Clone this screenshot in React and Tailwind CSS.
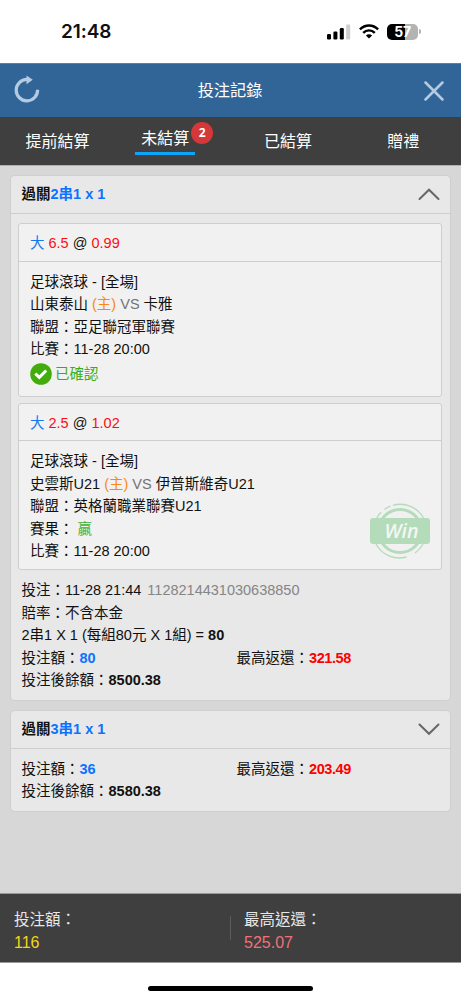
import React from "react";

const slips = [
  {
    odds: "6.5",
    price: "0.99",
    home: "山東泰山",
    away: "卡雅",
    league: "亞足聯冠軍聯賽",
    time: "11-28 20:00",
    confirmed: true,
  },
  {
    odds: "2.5",
    price: "1.02",
    home: "史雲斯U21",
    away: "伊普斯維奇U21",
    league: "英格蘭職業聯賽U21",
    time: "11-28 20:00",
    result: "贏",
  },
];

function StatusBar() {
  return (
    <div className="flex h-[63px] shrink-0 items-center justify-between pl-[61px] pr-[40px]">
      <span className="font-['Inter'] text-[19px] leading-6 font-semibold tracking-[-0.1px]">
        21:48
      </span>
      <div className="flex items-center">
        <svg width="24" height="16" viewBox="0 0 24 16">
          <rect x="0" y="10" width="4" height="5.5" rx="1.2" />
          <rect x="6.4" y="7.5" width="4" height="8" rx="1.2" />
          <rect x="12.8" y="4" width="4" height="11.5" rx="1.2" />
          <rect x="19.2" y="0.5" width="4" height="15" rx="1.2" fill="#cfcfcf" />
        </svg>
        <svg className="ml-2" width="20" height="15" viewBox="0 0 20 15">
          <g fill="none" stroke="#000" strokeWidth="2.4">
            <path d="M0.9 5.4 C6 0.1 14 0.1 19.1 5.4" />
            <path d="M4.2 8.9 C7.5 5.5 12.5 5.5 15.8 8.9" />
          </g>
          <path d="M10 14.6 L6.9 11.5 C8.6 9.9 11.4 9.9 13.1 11.5 Z" />
        </svg>
        <div className="ml-2 flex h-4 w-[31px] items-center justify-center rounded-[5px] bg-linear-to-r from-black from-[57%] to-[#b3b3b3] to-[57%] font-['Inter'] text-[14px] leading-none font-bold tracking-[-0.3px] text-white">
          57
        </div>
        <div className="ml-px h-[5px] w-[2px] rounded-r-full bg-[#b3b3b3]" />
      </div>
    </div>
  );
}

function Header() {
  return (
    <div className="flex h-[54px] shrink-0 items-center justify-between border-t border-[#5b7fa5] bg-[#316597] pr-[17px] pl-[14px] text-white">
      <svg className="mb-[3px]" width="26" height="28" viewBox="0 0 26 28">
        <path
          d="M23.6 14.8 A10.7 10.7 0 1 1 13 4.4"
          fill="none"
          stroke="#b4cbe3"
          strokeWidth="3.2"
        />
        <path d="M12.5 0.4 L18.8 4.7 L12.5 9.2 Z" fill="#b4cbe3" />
      </svg>
      <h1 className="mr-1 text-[16.2px]">投注記錄</h1>
      <svg width="20" height="20" viewBox="0 0 20 20">
        <path
          d="M1.5 1.5 L18.5 18.5 M18.5 1.5 L1.5 18.5"
          stroke="#b4cbe3"
          strokeWidth="2.5"
          strokeLinecap="round"
        />
      </svg>
    </div>
  );
}

function Tabs() {
  return (
    <div className="grid h-12 shrink-0 grid-cols-4 bg-[#3f3f3f] text-[16px] leading-[50px] text-white">
      <div className="text-center">提前結算</div>
      <div className="relative pl-5">
        <div className="w-[60px] border-b-[3px] border-[#0ba5fa] pt-[9px] text-center leading-[26px]">
          未結算
        </div>
        <span className="absolute top-[5px] left-[76px] flex h-[22px] w-[22px] items-center justify-center rounded-full bg-[#d43838] font-['Open_Sans'] text-[12px] leading-none font-bold">
          2
        </span>
      </div>
      <div className="text-center">已結算</div>
      <div className="text-center">贈禮</div>
    </div>
  );
}

function Chevron({ up }) {
  return (
    <svg width="22" height="13" viewBox="0 0 22 13">
      <path
        d={up ? "M1.5 11 L11 1.7 L20.5 11" : "M1.5 1.5 L11 10.8 L20.5 1.5"}
        fill="none"
        stroke="#66676a"
        strokeWidth="2"
        strokeLinecap="round"
      />
    </svg>
  );
}

function WinStamp() {
  return (
    <svg
      className="absolute right-[10px] bottom-[9px]"
      width="62"
      height="58"
      viewBox="0 0 62 58"
    >
      <g fill="none" stroke="#b4dbba">
        <circle cx="31" cy="29" r="21.5" strokeWidth="3" />
        <path d="M24 3.3 A26.6 26.6 0 0 1 55 17" strokeWidth="1.3" />
        <path d="M7 17.5 A26.6 26.6 0 0 1 12 10.2" strokeWidth="1.3" />
        <path d="M15.5 7.4 A26.6 26.6 0 0 1 21.5 4.2" strokeWidth="1.3" />
        <path d="M54 42 A26.6 26.6 0 0 1 46 51" strokeWidth="1.3" />
        <path d="M7 42 A26.6 26.6 0 0 0 37.5 55" strokeWidth="1.3" />
      </g>
      <rect x="1" y="16" width="60" height="26" rx="3" fill="#b4dbba" />
      <text
        x="32.5"
        y="36"
        textAnchor="middle"
        fill="#f3f7f3"
        fontFamily="Open Sans, sans-serif"
        fontSize="19.5"
        fontWeight="600"
        fontStyle="italic"
      >
        Win
      </text>
    </svg>
  );
}

function Slip({ slip }) {
  return (
    <div className="relative rounded-[3px] border border-[#cecece] bg-[#f1f1f1]">
      <div className="border-b border-[#cecece] px-[11px] pt-[8px] pb-[6px]">
        <span className="text-[#1677ee]">大</span>{" "}
        <span className="text-[#fb0d13]">{slip.odds}</span> @{" "}
        <span className="text-[#fb0d13]">{slip.price}</span>
      </div>
      <div className="px-[11px] pt-[9px] pb-[6.5px]">
        <p>足球滾球 - [全場]</p>
        <p>
          {slip.home} <span className="text-[#f88a12]">(主)</span>{" "}
          <span className="text-[#737373]">VS</span> {slip.away}
        </p>
        <p>聯盟：{slip.league}</p>
        {slip.result && (
          <p>
            賽果： <span className="text-[#3bb337]">{slip.result}</span>
          </p>
        )}
        <p>比賽：{slip.time}</p>
        {slip.confirmed && (
          <div className="flex items-center gap-[3px] pt-[2px] pb-[4px] text-[#41ac0c]">
            <svg width="22" height="22" viewBox="0 0 22 22">
              <circle cx="11" cy="11" r="10.8" fill="#41ac0c" />
              <path
                d="M5.3 10.6 L9.3 14.4 L16.2 7.5"
                fill="none"
                stroke="#fff"
                strokeWidth="3"
              />
            </svg>
            已確認
          </div>
        )}
      </div>
      {slip.result && <WinStamp />}
    </div>
  );
}

function Totals({ stake, back, balance }) {
  return (
    <>
      <div className="flex">
        <p className="w-[215px]">
          投注額：<b className="text-[#0b73ff]">{stake}</b>
        </p>
        <p>
          最高返還：
          <b className="tracking-[-0.4px] text-[#fe0000]">{back}</b>
        </p>
      </div>
      <p>
        投注後餘額：<b>{balance}</b>
      </p>
    </>
  );
}

function Card({ title, open, children }) {
  return (
    <div className="rounded-[4px] bg-[#e8e8e8] shadow-[0_0_0_1px_#cfcfcf]">
      <div className="flex h-[38px] items-center justify-between border-b border-[#cecece] pr-[10px] pl-[10.5px] font-bold">
        <p>
          過關<span className="text-[#0b73ff]">{title}</span>
        </p>
        <Chevron up={open} />
      </div>
      {children}
    </div>
  );
}

function App() {
  return (
    <div className="flex h-[1000px] w-[461px] flex-col overflow-hidden bg-white font-['Liberation_Sans','Noto_Sans_CJK_TC',sans-serif] text-[14.5px] leading-[22.5px] text-[#111]">
      <StatusBar />
      <Header />
      <Tabs />
      <div className="flex flex-1 flex-col gap-[11px] border-t border-[#b0b0b0] bg-[#d7d7d7] pt-[10px] pr-[11px] pl-[11px]">
        <Card title="2串1 x 1" open>
          <div className="flex flex-col gap-[6px] pt-[9px] pr-[8px] pl-[7px]">
            {slips.map((slip) => (
              <Slip key={slip.home} slip={slip} />
            ))}
          </div>
          <div className="px-[10.5px] pt-[9px] pb-[8px]">
            <p>
              投注：11-28 21:44{" "}
              <span className="ml-[2px] text-[#858585]">
                1128214431030638850
              </span>
            </p>
            <p>賠率：不含本金</p>
            <p>
              2串1 X 1 (每組80元 X 1組) = <b>80</b>
            </p>
            <Totals stake="80" back="321.58" balance="8500.38" />
          </div>
        </Card>
        <Card title="3串1 x 1">
          <div className="px-[10.5px] pt-[9px] pb-[8px]">
            <Totals stake="36" back="203.49" balance="8580.38" />
          </div>
        </Card>
      </div>
      <div className="flex h-[70px] shrink-0 items-center border-y border-[#999] bg-[#3f3f3f] text-[15.5px] text-[#e8e8e8]">
        <div className="w-[230px] pt-[7px] pl-[14px]">
          <p>投注額：</p>
          <p className="text-[16px] text-[#f4d516]">116</p>
        </div>
        <div className="h-6 w-px bg-[#5c5c5c]" />
        <div className="pt-[7px] pl-[13px]">
          <p>最高返還：</p>
          <p className="text-[16px] text-[#f27177]">525.07</p>
        </div>
      </div>
      <div className="flex h-[37px] shrink-0 items-end justify-center pb-[9px]">
        <div className="h-[5px] w-[165px] rounded-full bg-black" />
      </div>
    </div>
  );
}

export default App;
